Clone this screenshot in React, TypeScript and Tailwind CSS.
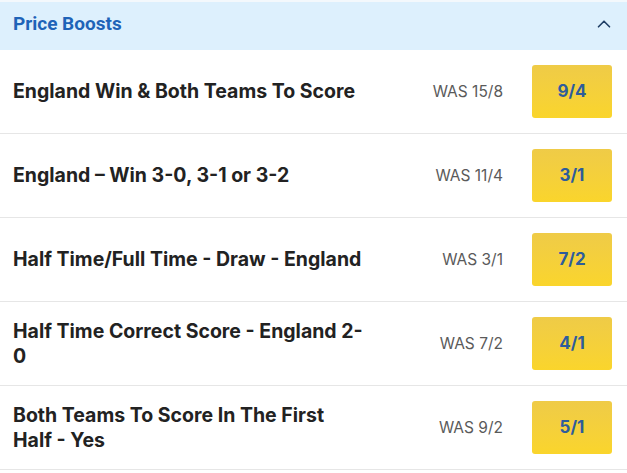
import { ChevronUp } from "lucide-react";

type Boost = { id: number; title: string; was: string; odds: string };

const boosts: Boost[] = [
  { id: 1, title: "England Win & Both Teams To Score", was: "15/8", odds: "9/4" },
  { id: 2, title: "England – Win 3-0, 3-1 or 3-2", was: "11/4", odds: "3/1" },
  { id: 3, title: "Half Time/Full Time - Draw - England", was: "3/1", odds: "7/2" },
  { id: 4, title: "Half Time Correct Score - England 2-0", was: "7/2", odds: "4/1" },
  { id: 5, title: "Both Teams To Score In The First Half - Yes", was: "9/2", odds: "5/1" },
];

export default function App() {
  return (
    <div className="min-h-[473px] w-[627px] bg-white font-['Inter',sans-serif]">
      <div className="border-t-2 border-[#f3f8fc] bg-[#ddf0fd]">
        <div className="flex h-[48px] items-center justify-between pb-[4px] pl-[13px] pr-[12px]">
          <span className="font-['Roboto',sans-serif] text-[19px] font-bold text-[#1e63b8]">
            Price Boosts
          </span>
          <ChevronUp size={22} strokeWidth={1.8} className="text-[#1f3f66]" />
        </div>
      </div>
      <ul>
        {boosts.map((b) => (
          <li
            key={b.id}
            className="flex h-[84px] items-center border-b border-[#e6e6e6] pl-[13px] pr-[15px]"
          >
            <span className="w-[352px] text-[19.5px] leading-[25px] font-bold text-[#222]">
              {b.title}
            </span>
            <span className="ml-auto mr-[29px] text-[15.5px] text-[#5a5a5a]">WAS {b.was}</span>
            <button
              type="button"
              className="flex h-[53px] w-[80px] items-center justify-center rounded-[3px] bg-gradient-to-b from-[#efcb47] to-[#fad52b] text-[17px] font-bold text-[#2d5c9c]"
            >
              {b.odds}
            </button>
          </li>
        ))}
      </ul>
    </div>
  );
}
